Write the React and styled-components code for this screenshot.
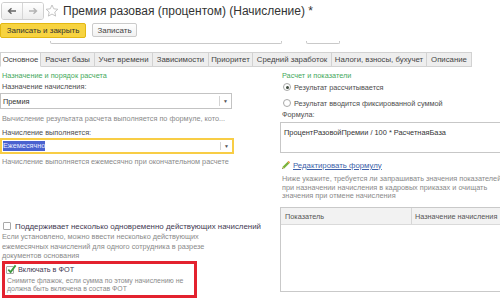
import React from 'react';
import styled, { createGlobalStyle } from 'styled-components';

const GlobalStyle = createGlobalStyle`
  html, body {
    margin: 0;
    padding: 0;
    background: #fff;
    overflow: hidden;
  }
  body {
    font-family: 'Liberation Sans', Arial, sans-serif;
    font-size: 7.3px;
    color: #4d4d4d;
  }
`;

const Page = styled.div`
  width: 560px;
  height: 300px;
`;

const TopBar = styled.div`
  display: flex;
  align-items: center;
  height: 22px;
  padding-left: 1px;
`;

const NavGroup = styled.div`
  display: flex;
  height: 18px;
  box-sizing: border-box;
  border: 1px solid #cfcfcf;
  border-radius: 3px;
  overflow: hidden;
`;

const NavButton = styled.div`
  width: 20px;
  display: flex;
  align-items: center;
  justify-content: center;
  background: linear-gradient(#ffffff, #ededed);
  & + & {
    border-left: 1px solid #d6d6d6;
  }
`;

const StarBox = styled.div`
  display: flex;
  margin-left: 1px;
`;

const Title = styled.div`
  margin-left: 4px;
  font-size: 12px;
  color: #333;
  white-space: nowrap;
`;

const CommandBar = styled.div`
  display: flex;
  align-items: flex-start;
  gap: 6px;
  margin-top: 1px;
  font-size: 8px;
`;

const PrimaryButton = styled.div`
  width: 86px;
  height: 15px;
  box-sizing: border-box;
  display: flex;
  align-items: center;
  justify-content: center;
  background: #f7d340;
  border: 1px solid #e2b814;
  border-radius: 2px;
  color: #333;
`;

const Button = styled.div`
  width: 45px;
  height: 14px;
  box-sizing: border-box;
  display: flex;
  align-items: center;
  justify-content: center;
  background: linear-gradient(#ffffff, #f1f1f1);
  border: 1px solid #cbcbcb;
  border-radius: 2px;
  color: #444;
`;

const DecorRow = styled.div`
  display: flex;
  margin-top: 3px;
`;

const Bracket = styled.div`
  height: 2px;
  width: ${p => p.$w}px;
  margin-left: ${p => p.$ml}px;
  border: 1px solid #c9c9c9;
  border-top: none;
  border-radius: 0 0 2px 2px;
`;

const TabStrip = styled.div`
  display: flex;
  margin-top: 8px;
  font-size: 7.8px;
`;

const Tab = styled.div`
  width: ${p => p.$w}px;
  height: 15px;
  box-sizing: border-box;
  display: flex;
  align-items: center;
  justify-content: center;
  white-space: nowrap;
  border: 1px solid #d2d2d2;
  border-left: ${p => (p.$first ? '1px solid #d2d2d2' : 'none')};
  border-bottom-color: ${p => (p.$active ? '#fff' : '#d2d2d2')};
  background: ${p => (p.$active ? '#fff' : '#eeeeee')};
  color: #444;
`;

const Content = styled.div`
  display: grid;
  grid-template-columns: 235px 300px;
  column-gap: 45px;
  padding-top: 4px;
`;

const Column = styled.div`
  display: flex;
  flex-direction: column;
  min-width: 0;
`;

const GroupTitle = styled.div`
  line-height: 10px;
  padding-left: 2px;
  color: #45a95c;
  white-space: nowrap;
`;

const Label = styled.div`
  line-height: 10px;
  padding-left: 2px;
  margin-top: ${p => p.$mt || 0}px;
  color: #4d4d4d;
  white-space: nowrap;
`;

const Note = styled.div`
  line-height: ${p => p.$lh || 10}px;
  padding-left: 2px;
  margin-top: ${p => p.$mt || 0}px;
  font-size: ${p => p.$fs || 7.3}px;
  color: #8a8a8a;
  white-space: nowrap;
`;

const Select = styled.div`
  display: flex;
  height: 16px;
  width: ${p => p.$w}px;
  box-sizing: border-box;
  margin-top: ${p => p.$mt || 0}px;
  border: ${p => (p.$focused ? '2px solid #f8cd45' : '1px solid #c3c3c3')};
  background: #fff;
`;

const SelectValue = styled.div`
  flex: 1;
  display: flex;
  align-items: center;
  padding-left: ${p => (p.$focused ? 1 : 2)}px;
  color: #333;
`;

const Selected = styled.span`
  background: #4a62cf;
  color: #e8ecff;
  line-height: 10px;
`;

const DropButton = styled.div`
  width: 11px;
  display: flex;
  align-items: center;
  justify-content: center;
  border-left: 1px solid #d4d4d4;
  margin: 2px 0;
  font-size: 5px;
  color: #555;
`;

const CheckRow = styled.div`
  display: flex;
  align-items: center;
  gap: 4px;
  height: 10px;
  margin-top: ${p => p.$mt || 0}px;
  padding-left: ${p => p.$pl || 3}px;
  font-size: ${p => p.$fs || 7.3}px;
  color: #3f3a52;
  white-space: nowrap;
`;

const CheckBox = styled.div`
  position: relative;
  width: 8px;
  height: 8px;
  box-sizing: border-box;
  border: 1px solid #a9a9a9;
  border-radius: 1px;
  background: #fff;
  flex: none;
`;

const CheckMark = styled.svg`
  position: absolute;
  left: 0px;
  top: -3px;
`;

const HighlightBox = styled.div`
  margin-left: 2px;
  width: 195px;
  height: 37px;
  box-sizing: border-box;
  border: 3px solid #e3222f;
  padding-top: 1px;
`;

const RadioRow = styled.div`
  display: flex;
  align-items: center;
  gap: 3px;
  height: 10px;
  margin-top: ${p => p.$mt || 0}px;
  padding-left: 3px;
  color: #4d4d4d;
  white-space: nowrap;
`;

const Radio = styled.div`
  width: 8px;
  height: 8px;
  box-sizing: border-box;
  border: 1px solid #a8a8a8;
  border-radius: 50%;
  display: flex;
  align-items: center;
  justify-content: center;
  background: #fff;
  &::after {
    content: '';
    width: 3px;
    height: 3px;
    border-radius: 50%;
    background: ${p => (p.$on ? '#3d4a3d' : 'transparent')};
  }
`;

const FormulaBox = styled.div`
  height: 31px;
  box-sizing: border-box;
  margin-top: 2px;
  border: 1px solid #c7c7c7;
  padding: 5px 0 0 3px;
  line-height: 10px;
  font-size: 7.4px;
  color: #333;
  white-space: nowrap;
`;

const LinkRow = styled.div`
  display: flex;
  align-items: center;
  gap: 3px;
  height: 10px;
  margin-top: 7px;
  padding-left: 1px;
`;

const Link = styled.span`
  font-size: 7.8px;
  color: #3d5fa9;
  text-decoration: underline;
  white-space: nowrap;
`;

const Table = styled.div`
  margin-top: 6px;
  height: 85px;
  box-sizing: border-box;
  border: 1px solid #c9c9c9;
  display: flex;
  flex-direction: column;
`;

const TableHead = styled.div`
  display: grid;
  grid-template-columns: 130px 1fr;
  height: 16px;
  background: #f2f2f2;
  border-bottom: 1px solid #dadada;
`;

const HeadCell = styled.div`
  display: flex;
  align-items: center;
  padding-left: ${p => p.$pl || 4}px;
  color: #555;
  white-space: nowrap;
  & + & {
    border-left: 1px solid #d6d6d6;
  }
`;

const Arrow = ({ dir, color }) => (
  <svg width="10" height="8" viewBox="0 0 10 8">
    {dir === 'left' ? (
      <path d="M9 4H2M4.5 1.2L1.5 4l3 2.8" fill="none" stroke={color} strokeWidth="1.4" />
    ) : (
      <path d="M1 4h7M5.5 1.2L8.5 4l-3 2.8" fill="none" stroke={color} strokeWidth="1.4" />
    )}
  </svg>
);

const Star = () => (
  <svg width="14" height="14" viewBox="0 0 14 14">
    <path
      d="M7 1l1.75 3.8 4.1.45-3.05 2.8.85 4.05L7 10.05 3.35 12.1l.85-4.05-3.05-2.8 4.1-.45z"
      fill="none"
      stroke="#bdbdbd"
      strokeWidth="0.9"
    />
  </svg>
);

const Pencil = () => (
  <svg width="9" height="9" viewBox="0 0 9 9">
    <path d="M1 8l.6-2.2L6.6.8l1.6 1.6-5 5z" fill="#7bb33c" />
    <path d="M6.6.8l1.6 1.6.5-.5a.6.6 0 000-.9l-.7-.7a.6.6 0 00-.9 0z" fill="#e88d3a" />
    <path d="M1 8l.6-2.2 1.6 1.6z" fill="#f0d9a8" />
    <path d="M1 8l.3-1 .7.7z" fill="#444" />
  </svg>
);

const Check = () => (
  <CheckMark width="10" height="10" viewBox="0 0 10 10">
    <path d="M1.3 5.6L3.6 8l5-6.6" fill="none" stroke="#3c9a3f" strokeWidth="1.8" />
  </CheckMark>
);

const tabs = [
  { name: 'Основное', w: 41, active: true },
  { name: 'Расчет базы', w: 54 },
  { name: 'Учет времени', w: 58 },
  { name: 'Зависимости', w: 56 },
  { name: 'Приоритет', w: 44 },
  { name: 'Средний заработок', w: 79 },
  { name: 'Налоги, взносы, бухучет', w: 95 },
  { name: 'Описание', w: 45 },
];

export default function App() {
  return (
    <Page>
      <GlobalStyle />
      <TopBar>
        <NavGroup>
          <NavButton>
            <Arrow dir="left" color="#666" />
          </NavButton>
          <NavButton>
            <Arrow dir="right" color="#b3b3b3" />
          </NavButton>
        </NavGroup>
        <StarBox>
          <Star />
        </StarBox>
        <Title>Премия разовая (процентом) (Начисление) *</Title>
      </TopBar>

      <CommandBar>
        <PrimaryButton>Записать и закрыть</PrimaryButton>
        <Button>Записать</Button>
      </CommandBar>

      <DecorRow>
        <Bracket $ml={50} $w={230} />
        <Bracket $ml={24} $w={32} />
      </DecorRow>

      <TabStrip>
        {tabs.map((t, i) => (
          <Tab key={t.name} $w={t.w} $active={t.active} $first={i === 0}>
            {t.name}
          </Tab>
        ))}
      </TabStrip>

      <Content>
        <Column>
          <GroupTitle>Назначение и порядок расчета</GroupTitle>
          <Label $mt={1}>Назначение начисления:</Label>
          <Select $w={232} $mt={1}>
            <SelectValue>Премия</SelectValue>
            <DropButton>▼</DropButton>
          </Select>
          <Note $mt={5}>Вычисление результата расчета выполняется по формуле, кото...</Note>
          <Label $mt={4}>Начисление выполняется:</Label>
          <Select $w={234} $focused>
            <SelectValue $focused>
              <Selected>Ежемесячно</Selected>
            </SelectValue>
            <DropButton>▼</DropButton>
          </Select>
          <Note $mt={3}>Начисление выполняется ежемесячно при окончательном расчете</Note>

          <CheckRow $mt={54} $fs={7.9}>
            <CheckBox />
            Поддерживает несколько одновременно действующих начислений
          </CheckRow>
          <Note $mt={1} $lh={9.5}>
            Если установлено, можно ввести несколько действующих
            <br />
            ежемесячных начислений для одного сотрудника в разрезе
            <br />
            документов основания
          </Note>

          <HighlightBox>
            <CheckRow $pl={1}>
              <CheckBox>
                <Check />
              </CheckBox>
              Включать в ФОТ
            </CheckRow>
            <Note $mt={2} $lh={8.5} $fs={6.9}>
              Снимите флажок, если сумма по этому начислению не
              <br />
              должна быть включена в состав ФОТ
            </Note>
          </HighlightBox>
        </Column>

        <Column>
          <GroupTitle>Расчет и показатели</GroupTitle>
          <RadioRow $mt={1}>
            <Radio $on />
            Результат рассчитывается
          </RadioRow>
          <RadioRow $mt={6}>
            <Radio />
            Результат вводится фиксированной суммой
          </RadioRow>
          <Label $mt={2}>Формула:</Label>
          <FormulaBox>ПроцентРазовойПремии / 100 * РасчетнаяБаза</FormulaBox>
          <LinkRow>
            <Pencil />
            <Link>Редактировать формулу</Link>
          </LinkRow>
          <Note $mt={5} $lh={8.7}>
            Ниже укажите, требуется ли запрашивать значения показателей
            <br />
            при назначении начисления в кадровых приказах и очищать
            <br />
            значения при отмене начисления
          </Note>
          <Table>
            <TableHead>
              <HeadCell>Показатель</HeadCell>
              <HeadCell $pl={3}>Назначение начисления</HeadCell>
            </TableHead>
          </Table>
        </Column>
      </Content>
    </Page>
  );
}
